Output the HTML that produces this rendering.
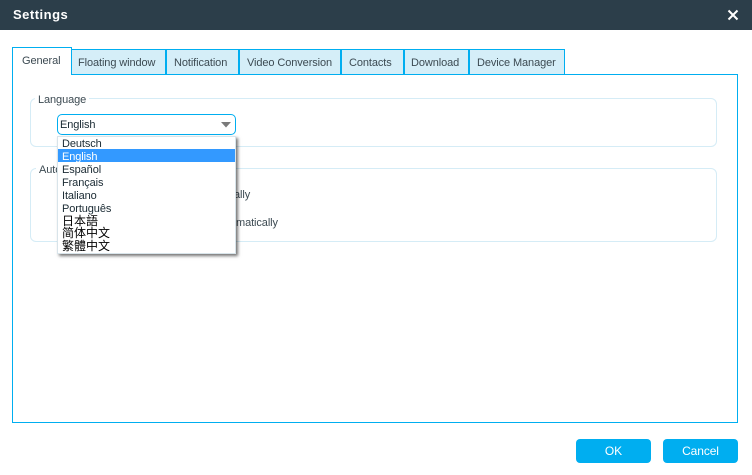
<!DOCTYPE html>
<html>
<head>
<meta charset="utf-8">
<style>
html,body{margin:0;padding:0;width:752px;height:475px;overflow:hidden;background:#fff;}
body{position:relative;font-family:"Liberation Sans","Noto Sans CJK SC",sans-serif;font-size:11px;color:#3c4a52;letter-spacing:-.1px;}
.a{position:absolute;box-sizing:border-box;}
.t{position:absolute;white-space:nowrap;line-height:13px;}
.tab{position:absolute;box-sizing:border-box;top:49px;height:26px;background:#d5eef8;border:1px solid #00aef0;padding-left:7px;text-align:left;line-height:26px;white-space:nowrap;font-size:11px;}
.item{position:absolute;left:4px;white-space:nowrap;line-height:13px;height:13px;color:#1a2a33;font-size:11px;}
.cjk{font-size:12px;color:#000;letter-spacing:0;}
.btn{position:absolute;top:439px;width:75px;height:24px;background:#00aef0;border-radius:4px;color:#fff;text-align:center;line-height:24px;font-size:12px;letter-spacing:-.1px;}
</style>
</head>
<body>
<div class="a" style="left:0;top:0;width:752px;height:30px;background:#2c3e4a;"></div>
<div class="t" style="left:13px;top:7px;color:#fff;font-weight:bold;font-size:13px;line-height:15px;letter-spacing:.5px;">Settings</div>
<svg class="a" style="left:727px;top:9px;" width="12" height="12" viewBox="0 0 12 12"><path d="M1.5 1.5L10.5 10.5M10.5 1.5L1.5 10.5" stroke="#fff" stroke-width="2" fill="none"/></svg>

<div class="a" style="left:12px;top:74px;width:726px;height:349px;border:1px solid #00aef0;"></div>

<div class="tab" style="left:71px;width:95px;padding-left:6px;">Floating window</div>
<div class="tab" style="left:166px;width:73px;">Notification</div>
<div class="tab" style="left:239px;width:102px;">Video Conversion</div>
<div class="tab" style="left:341px;width:63px;">Contacts</div>
<div class="tab" style="left:404px;width:65px;padding-left:6px;">Download</div>
<div class="tab" style="left:469px;width:96px;">Device Manager</div>
<div class="a" style="left:12px;top:47px;width:60px;height:28px;background:#fff;border:1px solid #00aef0;border-bottom:none;padding-left:9px;line-height:26px;font-size:11px;">General</div>

<div class="a" style="left:30px;top:98px;width:687px;height:49px;border:1px solid #d5ecf6;border-radius:6px;"></div>
<div class="t" style="left:35px;top:93px;background:#fff;padding:0 3px;line-height:14px;height:11px;"><span style="position:relative;top:0;">Language</span></div>

<div class="a" style="left:30px;top:168px;width:687px;height:74px;border:1px solid #d5ecf6;border-radius:6px;"></div>
<div class="t" style="left:36px;top:164px;background:#fff;padding:0 3px;">Auto</div>
<div class="t" style="left:234px;top:188px;line-height:14px;">ally</div>
<div class="t" style="left:230px;top:216px;line-height:14px;">omatically</div>

<div class="a" style="left:57px;top:114px;width:179px;height:21px;border:1px solid #00aef0;border-radius:5px;background:#fff;"></div>
<div class="t" style="left:60px;top:118px;line-height:14px;color:#1a2a33;">English</div>
<svg class="a" style="left:220px;top:122px;" width="12" height="6" viewBox="0 0 12 6"><path d="M1 0H11L6 5.5Z" fill="#7a7a7a"/></svg>

<div class="a" style="left:57px;top:136px;width:179px;height:118px;background:#fff;border:1px solid #d8e4ea;box-shadow:2px 2px 3px rgba(0,0,0,.55);">
  <div class="a" style="left:0;top:12px;width:177px;height:13px;background:#3399ff;"></div>
  <div class="item" style="top:1px;">Deutsch</div>
  <div class="item" style="top:14px;color:#fff;">English</div>
  <div class="item" style="top:27px;">Español</div>
  <div class="item" style="top:40px;">Français</div>
  <div class="item" style="top:53px;">Italiano</div>
  <div class="item" style="top:66px;">Português</div>
  <div class="item cjk" style="top:78px;">日本語</div>
  <div class="item cjk" style="top:90px;">简体中文</div>
  <div class="item cjk" style="top:103px;">繁體中文</div>
</div>

<div class="btn" style="left:576px;">OK</div>
<div class="btn" style="left:663px;">Cancel</div>
</body>
</html>
